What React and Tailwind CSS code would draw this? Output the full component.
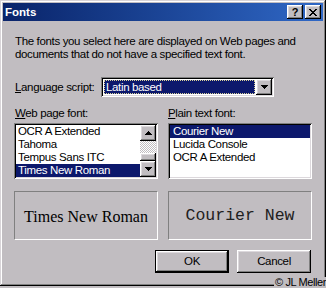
import React from "react";

const frame =
  "shadow-[inset_-1px_-1px_#000,inset_1px_1px_#d8d4d8,inset_-2px_-2px_#808080,inset_2px_2px_#fff]";
const raised =
  "shadow-[inset_-1px_-1px_#000,inset_1px_1px_#fff,inset_-2px_-2px_#808080,inset_2px_2px_#dcd8dc]";
const sunken =
  "shadow-[inset_1px_1px_#808080,inset_-1px_-1px_#fff,inset_2px_2px_#000,inset_-2px_-2px_#dcd8dc]";
const navy = "bg-[#0c186c] text-white";

function Arrow({ down }) {
  // classic 7x4 pixel triangle
  const rows = [1, 3, 5, 7];
  const order = down ? [...rows].reverse() : rows;
  return (
    <svg width="7" height="4" viewBox="0 0 7 4" shapeRendering="crispEdges">
      {order.map((w, i) => (
        <rect key={i} x={(7 - w) / 2} y={i} width={w} height="1" fill="#000" />
      ))}
    </svg>
  );
}

function CloseGlyph() {
  const px = [
    [0, 0, 2], [6, 0, 2],
    [1, 1, 2], [5, 1, 2],
    [2, 2, 4],
    [3, 3, 2],
    [2, 4, 4],
    [1, 5, 2], [5, 5, 2],
    [0, 6, 2], [6, 6, 2],
  ];
  return (
    <svg width="8" height="7" viewBox="0 0 8 7" shapeRendering="crispEdges">
      {px.map(([x, y, w], i) => (
        <rect key={i} x={x} y={y} width={w} height="1" fill="#000" />
      ))}
    </svg>
  );
}

function TitleBar() {
  return (
    <div className="flex items-center h-[18px] pl-[2px] pr-[2px] bg-linear-to-r from-[#0a246a] to-[#3068c6]">
      <span className="flex-1 font-bold text-white text-[11.5px] tracking-normal leading-[13px]">
        Fonts
      </span>
      <div className="flex gap-[2px]">
        <div className={`flex items-center justify-center w-[16px] h-[14px] bg-[#c1bdc1] ${raised}`}>
          <span className="font-bold text-[11px] leading-[11px] tracking-normal">?</span>
        </div>
        <div className={`flex items-center justify-center w-[16px] h-[14px] bg-[#c1bdc1] ${raised}`}>
          <CloseGlyph />
        </div>
      </div>
    </div>
  );
}

function Row({ children, selected }) {
  return (
    <div className={`h-[13px] leading-[13px] pl-[2px] whitespace-nowrap ${selected ? navy : ""}`}>
      {children}
    </div>
  );
}

export default function App() {
  const webFonts = ["OCR A Extended", "Tahoma", "Tempus Sans ITC", "Times New Roman"];
  const plainFonts = ["Courier New", "Lucida Console", "OCR A Extended"];

  return (
    <div className="relative w-[326px] h-[288px] overflow-hidden bg-[#c1bdc1] text-black text-[11.5px] tracking-[-0.35px] font-['Liberation_Sans',Arial,sans-serif]">
      <div className={`flex flex-col w-[326px] h-[286px] p-[3px] ${frame}`}>
        <TitleBar />

        <div className="flex flex-col pl-[11px] pr-[11px] pt-[14px]">
          <p className="pl-[1px] leading-[13px]">
            The fonts you select here are displayed on Web pages and
            <br />
            documents that do not have a specified text font.
          </p>

          <div className="flex items-center mt-[16px]">
            <label className="w-[87px] pl-[1px] leading-[13px]">
              <span className="underline">L</span>anguage script:
            </label>
            <div className={`flex w-[173px] h-[20px] p-[2px] bg-white ${sunken}`}>
              <div className="flex-1 p-[1px]">
                <div className={`h-full flex items-center pl-[1px] leading-[13px] border border-dotted border-[#d8d09a] ${navy}`}>
                  Latin based
                </div>
              </div>
              <div className={`flex items-center justify-center w-[16px] h-[16px] bg-[#c1bdc1] ${raised}`}>
                <Arrow down />
              </div>
            </div>
          </div>

          <div className="grid grid-cols-[144px_144px] gap-x-[10px] mt-[10px]">
            <label className="pl-[1px] leading-[13px]">
              <span className="underline">W</span>eb page font:
            </label>
            <label className="leading-[13px]">
              <span className="underline">P</span>lain text font:
            </label>

            <div className={`flex h-[56px] mt-[3px] p-[2px] bg-white ${sunken}`}>
              <div className="flex-1 flex flex-col overflow-hidden">
                {webFonts.map((f) => (
                  <Row key={f} selected={f === "Times New Roman"}>
                    {f}
                  </Row>
                ))}
              </div>
              <div className="flex flex-col w-[16px]">
                <div className={`flex items-center justify-center h-[16px] bg-[#c1bdc1] ${raised}`}>
                  <Arrow />
                </div>
                <div className="h-[12px] bg-[image:repeating-conic-gradient(#c1bdc1_0%_25%,#ffffff_0%_50%)] bg-[length:2px_2px]" />
                <div className={`h-[8px] bg-[#c1bdc1] ${raised}`} />
                <div className={`flex items-center justify-center h-[16px] bg-[#c1bdc1] ${raised}`}>
                  <Arrow down />
                </div>
              </div>
            </div>

            <div className={`flex flex-col h-[56px] mt-[3px] p-[2px] bg-white ${sunken}`}>
              {plainFonts.map((f) => (
                <Row key={f} selected={f === "Courier New"}>
                  <span className="pl-[1px]">{f}</span>
                </Row>
              ))}
            </div>

            <div className="flex items-center justify-center h-[49px] mt-[12px] pt-[2px] border border-[#808080] border-b-white border-r-white">
              <span className="font-['Liberation_Serif','Times_New_Roman',serif] text-[16px] tracking-normal">
                Times New Roman
              </span>
            </div>
            <div className="flex items-center justify-center h-[49px] mt-[12px] pt-[2px] border border-[#808080] border-b-white border-r-white">
              <span className="font-['Liberation_Mono','Courier_New',monospace] text-[16.5px] tracking-normal text-[#202020]">
                Courier New
              </span>
            </div>
          </div>

          <div className="flex justify-end gap-[8px] mt-[10px] pr-[1px]">
            <button className="w-[74px] h-[23px] border border-black bg-[#c1bdc1]">
              <div className={`flex items-center justify-center h-full leading-[13px] ${raised}`}>OK</div>
            </button>
            <button className={`flex items-center justify-center w-[74px] h-[23px] leading-[13px] bg-[#c1bdc1] ${raised}`}>
              Cancel
            </button>
          </div>
        </div>
      </div>

      <span className="absolute bottom-0 right-0 pl-[1px] text-[11px] leading-[11px] tracking-[-0.4px] bg-[#c1bdc1]">
        © JL Meller
      </span>
    </div>
  );
}
